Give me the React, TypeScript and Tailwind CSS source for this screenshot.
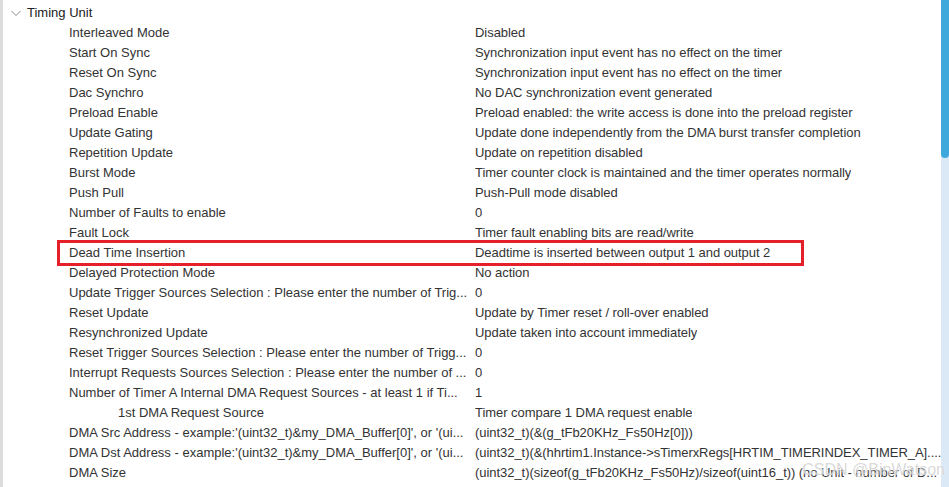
import React from "react";

type Row = { label: string; value: string; indent?: boolean; marked?: boolean };

const rows: Row[] = [
  { label: "Interleaved Mode", value: "Disabled" },
  { label: "Start On Sync", value: "Synchronization input event has no effect on the timer" },
  { label: "Reset On Sync", value: "Synchronization input event has no effect on the timer" },
  { label: "Dac Synchro", value: "No DAC synchronization event generated" },
  { label: "Preload Enable", value: "Preload enabled: the write access is done into the preload register" },
  { label: "Update Gating", value: "Update done independently from the DMA burst transfer completion" },
  { label: "Repetition Update", value: "Update on repetition disabled" },
  { label: "Burst Mode", value: "Timer counter clock is maintained and the timer operates normally" },
  { label: "Push Pull", value: "Push-Pull mode disabled" },
  { label: "Number of Faults to enable", value: "0" },
  { label: "Fault Lock", value: "Timer fault enabling bits are read/write" },
  { label: "Dead Time Insertion", value: "Deadtime is inserted between output 1 and output 2", marked: true },
  { label: "Delayed Protection Mode", value: "No action" },
  { label: "Update Trigger Sources Selection : Please enter the number of Trig...", value: "0" },
  { label: "Reset Update", value: "Update by Timer reset / roll-over enabled" },
  { label: "Resynchronized Update", value: "Update taken into account immediately" },
  { label: "Reset Trigger Sources Selection : Please enter the number of Trigg...", value: "0" },
  { label: "Interrupt Requests Sources Selection : Please enter the number of ...", value: "0" },
  { label: "Number of Timer A Internal DMA Request Sources - at least 1 if Ti...", value: "1" },
  { label: "1st DMA Request Source", value: "Timer compare 1 DMA request enable", indent: true },
  { label: "DMA Src Address - example:'(uint32_t)&my_DMA_Buffer[0]', or '(ui...", value: "(uint32_t)(&(g_tFb20KHz_Fs50Hz[0]))" },
  { label: "DMA Dst Address - example:'(uint32_t)&my_DMA_Buffer[0]', or '(ui...", value: "(uint32_t)(&(hhrtim1.Instance->sTimerxRegs[HRTIM_TIMERINDEX_TIMER_A]...." },
  { label: "DMA Size", value: "(uint32_t)(sizeof(g_tFb20KHz_Fs50Hz)/sizeof(uint16_t)) (no Unit - number of D..." },
];

export default function App() {
  return (
    <div className="relative flex w-[949px] h-[487px] overflow-hidden bg-white text-[13px] text-[#333] font-['Liberation_Sans',Arial,sans-serif]">
      {/* left gutter */}
      <div className="w-[3px] shrink-0 bg-[#dcdcdc]" />

      <div className="flex-1 min-w-0 pt-[3px]">
        {/* group header */}
        <div className="flex items-center h-[20px] pl-[7px]">
          <svg width="12" height="12" viewBox="0 0 12 12" className="mr-[5px]">
            <path d="M1.5 4 L6 8.5 L10.5 4" fill="none" stroke="#8a8a8a" strokeWidth="1" />
          </svg>
          <span className="text-[#222]">Timing Unit</span>
        </div>

        {rows.map((r, i) => (
          <div key={i} className="relative flex items-center h-[20px] whitespace-nowrap">
            <div className={`shrink-0 w-[472px] overflow-hidden ${r.indent ? "pl-[115px]" : "pl-[66px]"}`}>{r.label}</div>
            <div className="overflow-hidden tracking-[-0.05px]">{r.value}</div>
            {r.marked && (
              <span className="absolute left-[54px] top-[-3px] w-[747px] h-[26px] border-[3px] border-[#e5202a]" />
            )}
          </div>
        ))}
      </div>

      {/* scrollbar */}
      <div className="w-[8px] shrink-0 flex flex-col bg-[#dbe8f5]">
        <div className="h-[158px] bg-[#3ea8dc] rounded-b-[4px]" />
      </div>

      {/* watermark */}
      <span className="absolute right-[4px] top-[458px] text-[16px] text-[#cfcfcf]/80 [text-shadow:0_0_2px_#fff] pointer-events-none">
        CSDN @BinWatson
      </span>
    </div>
  );
}
